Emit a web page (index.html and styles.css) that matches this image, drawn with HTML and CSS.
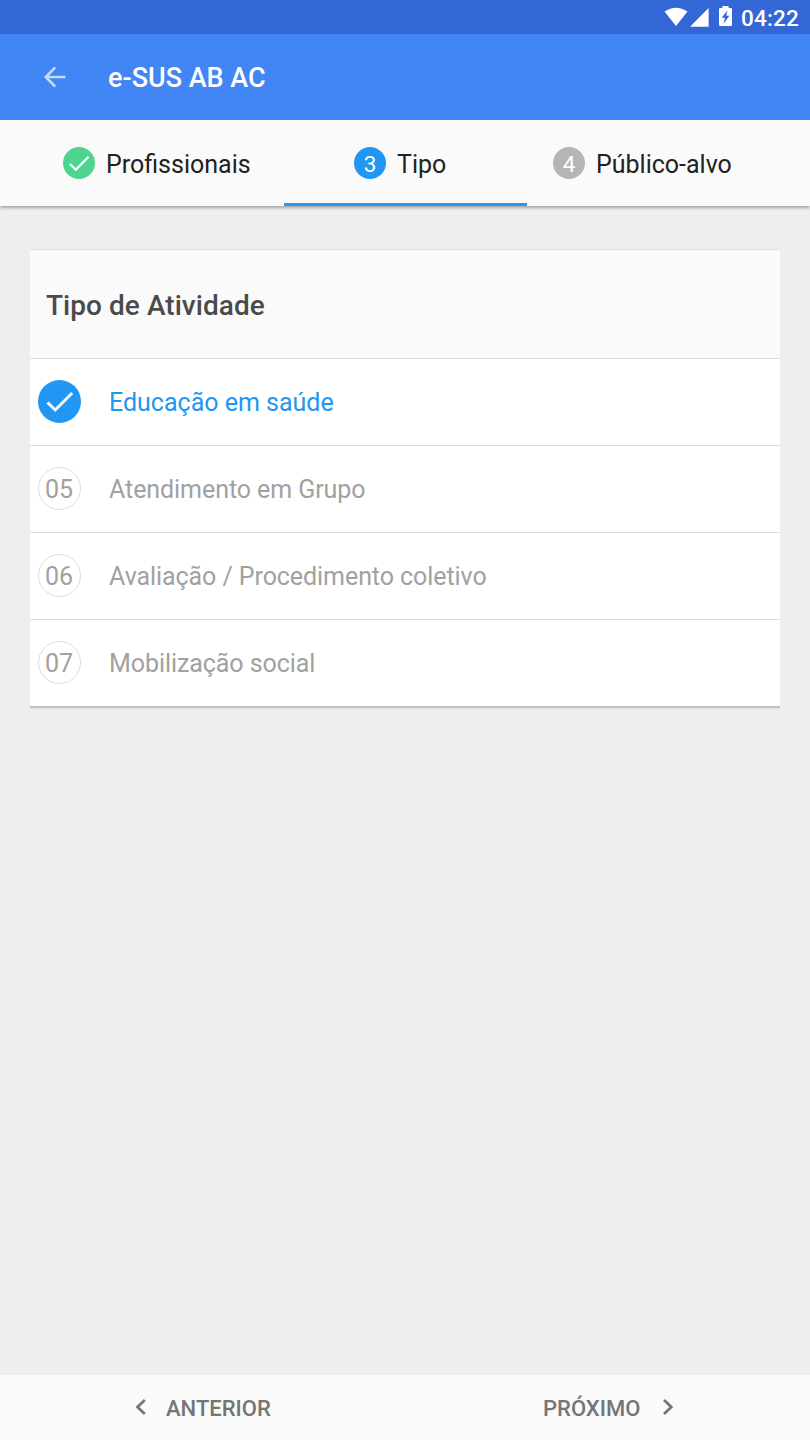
FILE: index.html
```html
<!DOCTYPE html>
<html lang="pt-BR">
<head>
<meta charset="utf-8">
<title>e-SUS AB AC</title>
<link rel="stylesheet" href="styles.css">
</head>
<body>
<div class="statusbar">
  <svg class="wifi" width="24" height="19" viewBox="0 0 24 19"><path d="M.5 4.6Q12-3 23.5 4.6L12 19Z"/></svg>
  <svg class="signal" width="19" height="19" viewBox="0 0 19 19"><path d="M18.6 0V18.8H0Z"/></svg>
  <svg class="battery" width="13" height="20" viewBox="0 0 13 20"><path fill-rule="evenodd" d="M1.2 2H3.4V0H9.6V2H11.8Q13 2 13 3.2V18.8Q13 20 11.8 20H1.2Q0 20 0 18.8V3.2Q0 2 1.2 2ZM8.5 4.6L2.6 11.8H5.9L4.7 17.4L10.4 9.8H7.3Z"/></svg>
  <span class="clock">04:22</span>
</div>
<header class="appbar">
  <svg class="back" width="22" height="22" viewBox="0 0 22 22"><path d="M21.5 11H2M11.2 1.5L1.7 11L11.2 20.5"/></svg>
  <h1 class="title">e-SUS AB AC</h1>
</header>
<nav class="tabs">
  <div class="tab tab-first">
    <span class="step done"><svg width="32" height="32" viewBox="0 0 32 32"><path d="M6.8 17L12.8 22.7L25.5 9.8"/></svg></span>
    <span class="tab-label">Profissionais</span>
  </div>
  <div class="tab tab-active">
    <span class="step current">3</span>
    <span class="tab-label">Tipo</span>
  </div>
  <div class="tab tab-next">
    <span class="step">4</span>
    <span class="tab-label">Público-alvo</span>
  </div>
</nav>
<main class="content">
  <section class="card">
    <h2 class="card-title">Tipo de Atividade</h2>
    <div class="option selected">
      <span class="badge"><svg width="43" height="43" viewBox="0 0 43 43"><path d="M9.5 22.5L17.2 30L34.2 13"/></svg></span>
      <span class="option-label">Educação em saúde</span>
    </div>
    <div class="option"><span class="badge">05</span><span class="option-label">Atendimento em Grupo</span></div>
    <div class="option"><span class="badge">06</span><span class="option-label">Avaliação / Procedimento coletivo</span></div>
    <div class="option"><span class="badge">07</span><span class="option-label">Mobilização social</span></div>
  </section>
</main>
<footer class="pager">
  <div class="prev">
    <svg class="chevron" width="11" height="16" viewBox="0 0 11 16"><path d="M9.8 1L2.5 8L9.8 15"/></svg>
    <span>ANTERIOR</span>
  </div>
  <div class="next">
    <span>PRÓXIMO</span>
    <svg class="chevron" width="10" height="16" viewBox="0 0 10 16"><path d="M1 1L8.3 8L1 15"/></svg>
  </div>
</footer>
</body>
</html>
```
FILE: styles.css
```css
* { box-sizing: border-box; }
body {
  margin: 0;
  width: 810px;
  height: 1440px;
  display: flex;
  flex-direction: column;
  background: #eee;
  font-family: Roboto, sans-serif;
  overflow: hidden;
}
.statusbar {
  height: 34px;
  flex: none;
  display: flex;
  justify-content: flex-end;
  align-items: flex-start;
  padding-right: 11px;
  background: #3367d6;
  color: #fff;
}
.statusbar svg { fill: #fff; }
.wifi { margin-top: 7px; }
.signal { margin: 8px 0 0 2px; }
.battery { margin: 6px 0 0 10px; }
.clock {
  width: 58px;
  margin: 4px 0 0 9px;
  font-size: 22.5px;
  line-height: 28px;
  font-weight: 500;
  letter-spacing: .2px;
  white-space: nowrap;
}
.appbar {
  height: 86px;
  flex: none;
  display: flex;
  align-items: center;
  padding-left: 44px;
  background: #4285f4;
  color: #fff;
}
.back {
  fill: none;
  stroke: #fff;
  stroke-width: 2.5;
  opacity: .7;
}
.title {
  margin: 2px 0 0 42px;
  font-size: 27px;
  line-height: 32px;
  font-weight: 500;
}
.tabs {
  height: 86px;
  flex: none;
  display: flex;
  background: #fafafa;
  box-shadow: 0 2px 3px rgba(0, 0, 0, .3);
}
.tab {
  display: flex;
  align-items: center;
  color: #212121;
  font-size: 25px;
  line-height: 30px;
}
.tab-first { width: 284px; padding-left: 63px; }
.tab-active { width: 243px; padding: 3px 0 0 70px; border-bottom: 3px solid #2b98f0; }
.tab-next { padding-left: 26px; }
.tab-label { margin: 4px 0 0 11px; white-space: nowrap; }
.step {
  width: 32px;
  height: 32px;
  display: flex;
  align-items: center;
  justify-content: center;
  padding-top: 1px;
  border-radius: 50%;
  background: #b5b5b5;
  color: #fff;
  font-size: 22.5px;
}
.done { padding: 0; background: #4dd48e; }
.current { background: #2196f3; }
.step svg, .badge svg { fill: none; stroke: #fff; stroke-width: 2.3; }
.content { flex: 1; padding: 43px 30px 0; }
.card {
  border-top: 1px solid #e1e1e1;
  background: #fff;
  box-shadow: 0 1px 0 #bdbdbd, 0 2px 0 #c9c9c9, 0 3px 0 #dfdfdf;
}
.card-title {
  height: 108px;
  margin: 0;
  padding: 2px 16px 0;
  display: flex;
  align-items: center;
  background: #fafafa;
  color: #4a4a4a;
  font-size: 28px;
  letter-spacing: .05px;
  font-weight: 500;
}
.option {
  height: 87px;
  display: flex;
  align-items: center;
  padding: 0 0 1px 8px;
  border-top: 1px solid #dcdcdc;
  color: #a1a1a1;
  font-size: 25px;
  line-height: 30px;
  letter-spacing: -.07px;
}
.badge {
  width: 43px;
  height: 43px;
  display: flex;
  align-items: center;
  justify-content: center;
  padding: 3px 1px 0 0;
  border: 1px solid #dcdcdc;
  border-radius: 50%;
}
.option-label { margin: 3px 0 0 28px; }
.selected { color: #2196f3; letter-spacing: 0; }
.selected .badge { padding: 0; border: 0; background: #2196f3; }
.badge svg { stroke-width: 3; stroke: #f1f8fe; }
.pager {
  height: 65px;
  flex: none;
  display: flex;
  background: #fafafa;
  color: #757575;
  font-size: 22px;
  line-height: 28px;
  font-weight: 500;
}
.prev, .next { width: 405px; display: flex; align-items: center; }
.prev { padding-left: 135px; gap: 20px; }
.next { padding-left: 138px; gap: 23px; }
.pager span { margin-top: 3px; }
.chevron { margin-bottom: 2px; fill: none; stroke: #757575; stroke-width: 2.7; }
```
